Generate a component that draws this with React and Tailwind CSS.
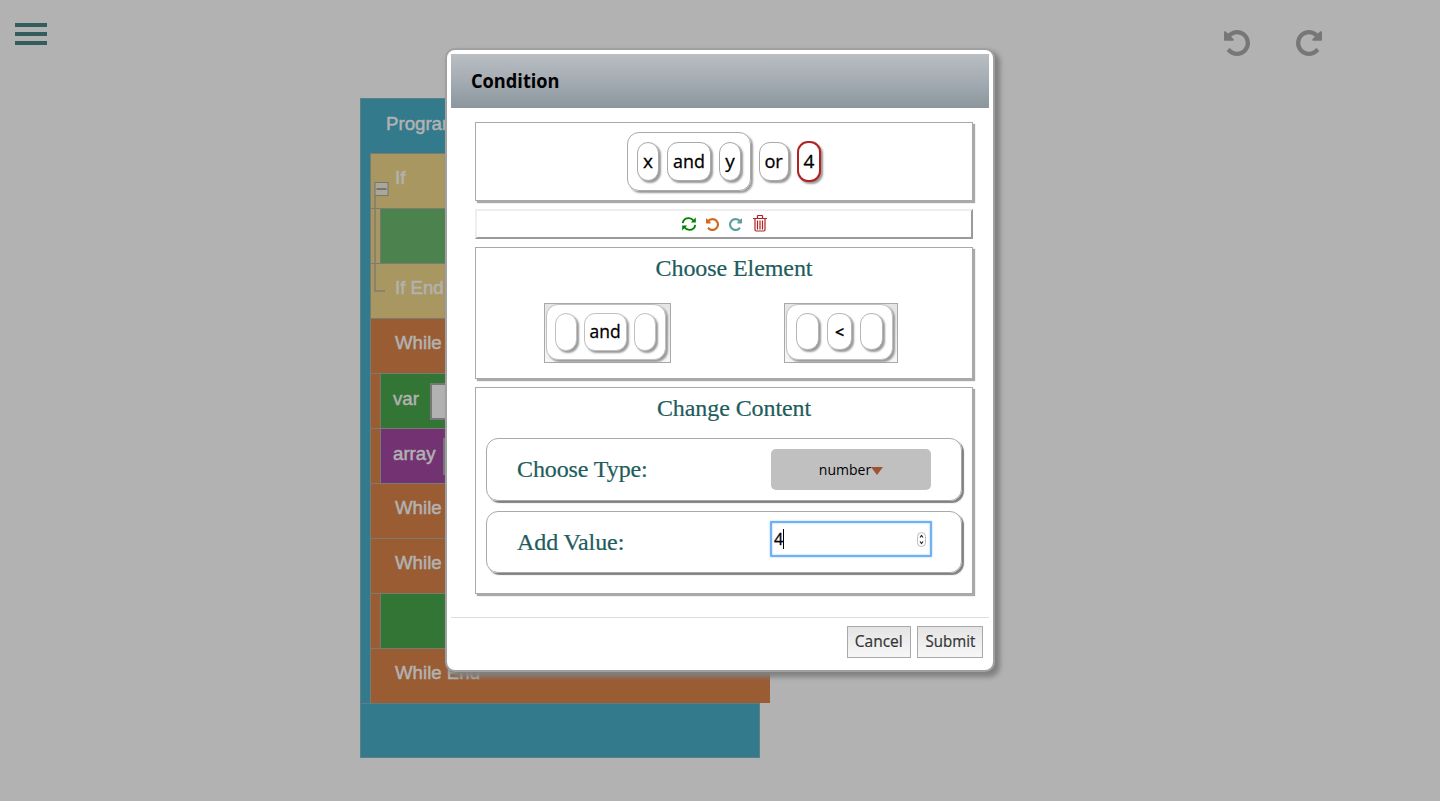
import React from 'react';

const sans = "font-['Open_Sans','Noto_Sans',sans-serif]";
const chipBase =
  'flex shrink-0 items-center justify-center rounded-[11px] border bg-white shadow-[2px_2px_2px_#999]';

function Undo({ className }) {
  return (
    <svg viewBox="128 128 1536 1536" className={className} fill="currentColor">
      <path d="M1664 896q0 156-61 298t-164 245-245 164-298 61q-172 0-327-72.5t-264-204.5q-7-10-6.5-22.5t8.5-20.5l137-138q10-9 25-9 16 2 23 12 73 95 179 147t225 52q104 0 198.5-40.5t163.5-109.5 109.5-163.5 40.5-198.5-40.5-198.5-109.5-163.5-163.5-109.5-198.5-40.5q-98 0-188 35.5t-160 101.5l137 138q31 30 14 69-17 40-59 40h-448q-26 0-45-19t-19-45v-448q0-42 40-59 39-17 69 14l130 129q107-101 244.5-156.5t284.5-55.5q156 0 298 61t245 164 164 245 61 298z" />
    </svg>
  );
}

function Refresh() {
  return (
    <svg viewBox="0 0 16 16" className="h-4 w-4 text-[#008000]" fill="none" stroke="currentColor" strokeWidth="1.8">
      <path d="M1.7 7.2C2.2 4.2 4.6 2.2 7.8 2.2c2.2 0 3.7 1 4.8 2.5" />
      <path d="M14.3 8.8c-.5 3-2.9 5-6.1 5-2.2 0-3.7-1-4.8-2.5" />
      <path d="M14.8 1.4v5H9.8zM1.2 14.6v-5h5z" fill="currentColor" stroke="none" />
    </svg>
  );
}

function Trash() {
  return (
    <svg viewBox="0 0 14 17" className="h-[17px] w-[14px] text-[#b22222]" fill="none" stroke="currentColor" strokeWidth="1">
      <path d="M0 3.5h14M4.5 3V1.2q0-.7.7-.7h3.6q.7 0 .7.7V3M2 4v10.5q0 1.5 1.2 1.5h7.6q1.2 0 1.2-1.5V4" strokeWidth="1.2" />
      <path d="M4.5 5.5v9M7 5.5v9M9.5 5.5v9" strokeWidth="1.2" />
    </svg>
  );
}

function Chip({ children, className }) {
  return <div className={`${chipBase} ${className}`}>{children}</div>;
}

function Row({ label, color, className = '' }) {
  return (
    <div className={`flex h-[55px] w-[400px] border-t border-l border-[#7b7b72] pl-6 pt-[13px] leading-[22px] ${color} ${className}`}>
      {label}
    </div>
  );
}

function Nest({ label, color, stem, children, padding = 'pl-3' }) {
  return (
    <div className={`flex h-[55px] w-[400px] border-t border-l border-[#7b7b72] pl-[9px] ${stem}`}>
      <div className={`flex grow border-l border-[#777] pt-[14px] leading-[22px] ${padding} ${color}`}>
        {label}
        {children}
      </div>
    </div>
  );
}

function Program() {
  return (
    <main className="ml-[360px] w-[410px] font-['Liberation_Sans',sans-serif] text-[18.67px] text-[#b2b2b2] [-webkit-text-stroke:0.5px_#b2b2b2]">
      <div className="h-[55px] w-[400px] border border-b-0 border-[#5d7e87] bg-[#337a8c] pt-[14px] pl-[25px] leading-[22px]">Program</div>
      <div className="flex border-l border-[#5d7e87] bg-[#337a8c] pl-[9px]">
        <div className="relative flex w-[400px] flex-col">
          <Row label="If" color="bg-[#a99761]" />
          <Nest color="bg-[#4c824e]" stem="bg-[#a99761]" />
          <Row label="If End" color="bg-[#a99761]" />
          <Row label="While" color="bg-[#9a5c33]" />
          <Nest label="var" color="bg-[#337535]" stem="bg-[#9a5c33]">
            <span className="-mt-[5px] ml-[11px] h-[37px] w-20 border-2 border-[#777] bg-[#b2b2b2]" />
          </Nest>
          <Nest label="array" color="bg-[#733373]" stem="bg-[#9a5c33]">
            <span className="-mt-[5px] ml-[7px] h-[37px] w-20 border-2 border-[#777] bg-[#b2b2b2]" />
          </Nest>
          <Row label="While End" color="bg-[#9a5c33]" />
          <Row label="While" color="bg-[#9a5c33]" />
          <Nest color="bg-[#337535]" stem="bg-[#9a5c33]" />
          <Row label="While End" color="bg-[#9a5c33]" />
          <svg viewBox="0 0 16 112" className="absolute top-[28px] left-1 h-28 w-4" fill="none">
            <path d="M1 15v95h10" stroke="#807d6d" strokeWidth="1.5" />
            <rect x="1" y="1.5" width="13" height="13" fill="#a9a69a" stroke="#77756c" />
            <path d="M2.5 8h10" stroke="#77756c" strokeWidth="2" />
          </svg>
        </div>
      </div>
      <div className="h-[55px] w-[400px] border border-[#5d7e87] bg-[#337a8c]" />
    </main>
  );
}

const panel = 'w-[498px] border border-[#a9a9a9] shadow-[2px_2px_1px_#a9a9a9]';
const row = 'flex w-[476px] items-center justify-between rounded-[12px] border border-[#a9a9a9] pl-[30px] pr-[30px] shadow-[2px_2px_1px_#808080]';
const title = "text-center font-['Liberation_Serif',serif] text-[24px] leading-[28px] text-[#215c5c] tracking-[-0.08px] [-webkit-text-stroke:0.2px_#215c5c]";
const fieldLabel = "-mt-px font-['Liberation_Serif',serif] text-[24px] leading-[28px] text-[#215c5c] tracking-[-0.1px] [-webkit-text-stroke:0.2px_#215c5c]";
const footBtn = 'flex h-8 items-center justify-center border border-[#a9a9a9] bg-linear-to-b from-[#e4e4e4] to-[#f7f7f7] pb-[2px] text-[16px] text-[#333] [-webkit-text-stroke:0.2px_#333]';

function Dialog() {
  return (
    <section className={`flex h-[624px] w-[550px] flex-col rounded-[10px] border-2 border-[#a0a0a0] bg-white p-1 text-black shadow-[4px_4px_5px_1px_#808080] ${sans}`}>
      <header className="flex h-[54px] shrink-0 items-center bg-linear-to-b from-[#b9bfc2] via-[#a4abb3] to-[#8a979c] pl-5 text-[20px] font-bold">
        <span className="inline-block origin-left scale-x-[0.91]">Condition</span>
      </header>
      <div className="flex h-[509px] shrink-0 flex-col items-start gap-2 pt-[14px] pl-6">
        <div className={`${panel} flex h-[79px] items-center justify-center gap-2 text-[19px] [-webkit-text-stroke:0.3px_#000]`}>
          <div className="flex h-[59px] w-[124px] items-center justify-center gap-2 rounded-[12px] border border-[#a9a9a9] shadow-[2px_2px_2px_#999]">
            <Chip className="h-[39px] w-[22px] border-[#a9a9a9]">x</Chip>
            <Chip className="h-[39px] w-[44px] border-[#a9a9a9]"><span className="scale-x-[0.94]">and</span></Chip>
            <Chip className="h-[39px] w-[22px] border-[#a9a9a9]">y</Chip>
          </div>
          <Chip className="h-[39px] w-[30px] border-[#a9a9a9]"><span className="scale-x-[0.96]">or</span></Chip>
          <Chip className="h-[41px] w-[24px] border-2 border-[#b22222]">4</Chip>
        </div>
        <div className="flex h-[30px] w-[498px] items-center justify-center border-2 border-t-[#eee] border-r-[#9a9a9a] border-b-[#9a9a9a] border-l-[#eee] pr-px pb-px">
          <Refresh />
          <Undo className="mt-[2px] ml-[9px] h-[13px] w-[13px] text-[#d2691e]" />
          <Undo className="mt-[2px] ml-[10px] h-[13px] w-[13px] -scale-x-100 text-[#5f9ea0]" />
          <span className="ml-[11px]"><Trash /></span>
        </div>
        <div className={`${panel} h-[132px] pt-[6px]`}>
          <h2 className={`${title} pl-5`}>Choose Element</h2>
          <div className="mt-[21px] flex gap-[113px] pl-[68px] text-[18px] [-webkit-text-stroke:0.3px_#000]">
            <div className="flex h-[60px] w-[127px] border border-[#a9a9a9] bg-linear-to-b from-[#e4e4e4] to-[#f7f7f7] pl-px">
              <div className="flex h-[56px] w-[120px] items-center justify-center gap-[7px] rounded-[12px] border border-[#c0c0c0] bg-white pr-px pb-px shadow-[2px_2px_2px_#999]">
                <Chip className="h-[38px] w-[22px] border-[#c0c0c0]" />
                <Chip className="h-[38px] w-[43px] border-[#c0c0c0]"><span className="scale-x-[0.97]">and</span></Chip>
                <Chip className="h-[38px] w-[22px] border-[#c0c0c0]" />
              </div>
            </div>
            <div className="flex h-[60px] w-[114px] border border-[#a9a9a9] bg-linear-to-b from-[#e4e4e4] to-[#f7f7f7] pl-px">
              <div className="flex h-[56px] w-[107px] items-center justify-center gap-2 rounded-[12px] border border-[#c0c0c0] bg-white pb-px shadow-[2px_2px_2px_#999]">
                <Chip className="h-[37px] w-[23px] border-[#b5b5b5]" />
                <Chip className="h-[37px] w-[25px] border-[#b5b5b5] text-[16px] font-semibold">&lt;</Chip>
                <Chip className="h-[37px] w-[23px] border-[#b5b5b5]" />
              </div>
            </div>
          </div>
        </div>
        <div className={`${panel} h-[207px] pt-[6px] pl-[10px]`}>
          <h2 className={`${title} pl-[10px]`}>Change Content</h2>
          <div className={`${row} mt-[16px] h-[63px]`}>
            <span className={fieldLabel}>Choose Type:</span>
            <div className="flex h-[41px] w-[160px] items-center justify-center rounded-[5px] bg-[#c0c0c0] text-[14px]">
              <span>number</span>
              <svg viewBox="0 0 12 8" className="mt-[2px] h-2 w-3"><path d="M0 0h12L6 8z" fill="#a0522d" /></svg>
            </div>
          </div>
          <div className={`${row} mt-[10px] h-[62px]`}>
            <span className={fieldLabel}>Add Value:</span>
            <div className="-mt-[6px] -mr-px flex h-[36px] w-[162px] items-center justify-between rounded-[1px] border-2 border-[#72b0f4] bg-white pr-1 pl-[2px] text-[16px] shadow-[0_0_2px_#8fc2fa,inset_0_0_2px_#8fc2fa]">
              <div className="flex items-center [-webkit-text-stroke:0.3px_#000]">4<i className="h-5 w-px bg-black" /></div>
              <svg viewBox="0 0 9 15" className="h-[15px] w-[9px]" fill="none">
                <rect x=".5" y=".5" width="8" height="14" rx="4" stroke="#bbb" />
                <path d="M3 5.5l1.5-2L6 5.5M3 9.5l1.5 2 1.5-2" stroke="#222" strokeWidth="1.2" />
              </svg>
            </div>
          </div>
        </div>
      </div>
      <footer className="flex justify-end gap-[6px] border-t border-[#dcdcdc] pt-2 pr-[6px]">
        <button className={`${footBtn} w-[64px]`}><span className="scale-x-[0.97]">Cancel</span></button>
        <button className={`${footBtn} w-[66px]`}><span className="scale-x-[0.94]">Submit</span></button>
      </footer>
    </section>
  );
}

export default function App() {
  return (
    <div className="relative h-[801px] w-[1440px] overflow-hidden bg-[#b2b2b2]">
      <header className="flex h-[98px] items-start justify-between">
        <div className="mt-[23px] ml-[15px] flex w-8 flex-col gap-[5px]">
          <i className="h-1 bg-[#335c5c]" />
          <i className="h-1 bg-[#335c5c]" />
          <i className="h-1 bg-[#335c5c]" />
        </div>
        <div className="mt-[30px] mr-[118px] flex gap-[46px] text-[#777]">
          <Undo className="h-[26px] w-[26px]" />
          <Undo className="h-[26px] w-[26px] -scale-x-100" />
        </div>
      </header>
      <Program />
      <div className="absolute inset-0 flex items-start justify-center pt-12">
        <Dialog />
      </div>
    </div>
  );
}
